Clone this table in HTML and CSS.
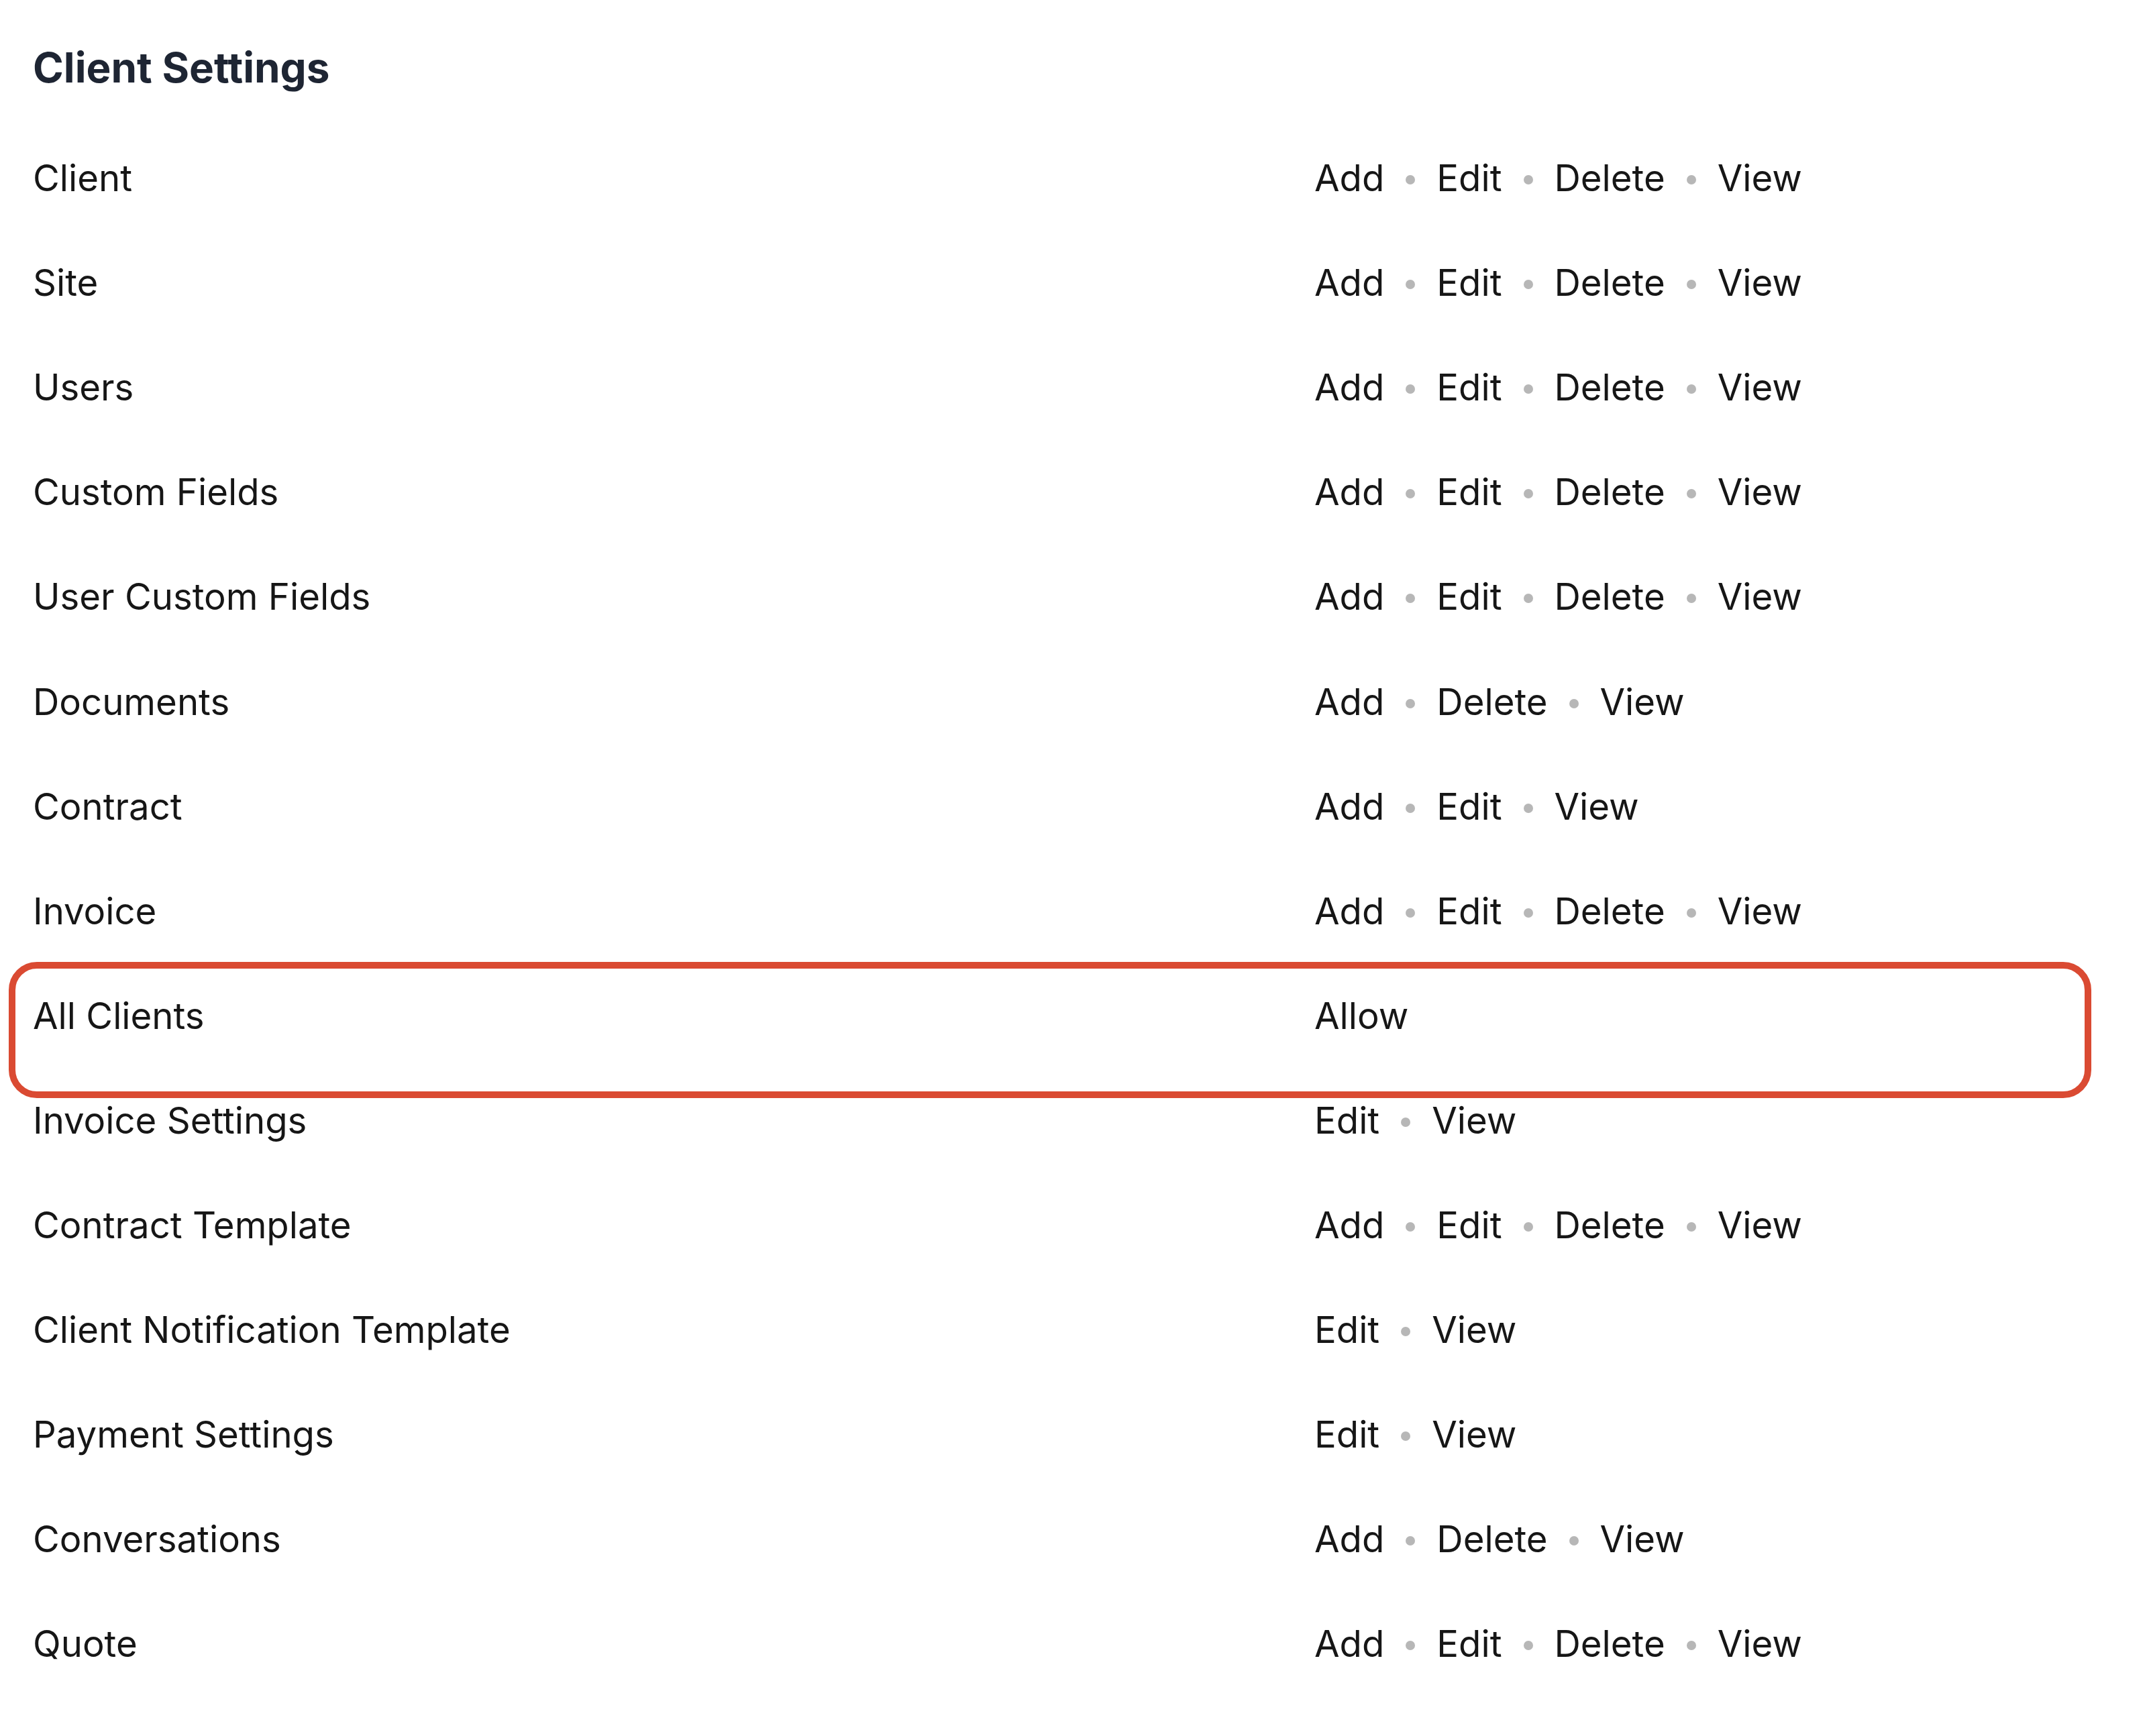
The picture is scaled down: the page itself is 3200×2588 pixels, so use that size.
FILE: index.html
```html
<!DOCTYPE html>
<html lang="en">
<head>
<meta charset="utf-8">
<title>Client Settings</title>
<link rel="stylesheet" href="styles.css">
</head>
<body>
<main class="page">
  <h1 class="title">Client Settings</h1>
  <div class="list">
    <div class="row"><div class="label">Client</div><div class="perms"><span>Add</span><i class="dot"></i><span>Edit</span><i class="dot"></i><span>Delete</span><i class="dot"></i><span>View</span></div></div>
    <div class="row"><div class="label">Site</div><div class="perms"><span>Add</span><i class="dot"></i><span>Edit</span><i class="dot"></i><span>Delete</span><i class="dot"></i><span>View</span></div></div>
    <div class="row"><div class="label">Users</div><div class="perms"><span>Add</span><i class="dot"></i><span>Edit</span><i class="dot"></i><span>Delete</span><i class="dot"></i><span>View</span></div></div>
    <div class="row"><div class="label">Custom Fields</div><div class="perms"><span>Add</span><i class="dot"></i><span>Edit</span><i class="dot"></i><span>Delete</span><i class="dot"></i><span>View</span></div></div>
    <div class="row"><div class="label">User Custom Fields</div><div class="perms"><span>Add</span><i class="dot"></i><span>Edit</span><i class="dot"></i><span>Delete</span><i class="dot"></i><span>View</span></div></div>
    <div class="row"><div class="label">Documents</div><div class="perms"><span>Add</span><i class="dot"></i><span>Delete</span><i class="dot"></i><span>View</span></div></div>
    <div class="row"><div class="label">Contract</div><div class="perms"><span>Add</span><i class="dot"></i><span>Edit</span><i class="dot"></i><span>View</span></div></div>
    <div class="row"><div class="label">Invoice</div><div class="perms"><span>Add</span><i class="dot"></i><span>Edit</span><i class="dot"></i><span>Delete</span><i class="dot"></i><span>View</span></div></div>
    <div class="row row-highlight"><div class="label">All Clients</div><div class="perms"><span>Allow</span></div></div>
    <div class="row"><div class="label">Invoice Settings</div><div class="perms"><span>Edit</span><i class="dot"></i><span>View</span></div></div>
    <div class="row"><div class="label">Contract Template</div><div class="perms"><span>Add</span><i class="dot"></i><span>Edit</span><i class="dot"></i><span>Delete</span><i class="dot"></i><span>View</span></div></div>
    <div class="row"><div class="label">Client Notification Template</div><div class="perms"><span>Edit</span><i class="dot"></i><span>View</span></div></div>
    <div class="row"><div class="label">Payment Settings</div><div class="perms"><span>Edit</span><i class="dot"></i><span>View</span></div></div>
    <div class="row"><div class="label">Conversations</div><div class="perms"><span>Add</span><i class="dot"></i><span>Delete</span><i class="dot"></i><span>View</span></div></div>
    <div class="row"><div class="label">Quote</div><div class="perms"><span>Add</span><i class="dot"></i><span>Edit</span><i class="dot"></i><span>Delete</span><i class="dot"></i><span>View</span></div></div>
  </div>
</main>
</body>
</html>
```
FILE: styles.css
```css
* { box-sizing: border-box; }
html, body {
  margin: 0;
  padding: 0;
  background: #ffffff;
}
body {
  font-family: Inter, "Liberation Sans", Arial, sans-serif;
  color: #161616;
}
.page {
  width: 3200px;
  min-height: 2588px;
  padding: 63px 0 0 49px;
}
.title {
  margin: 0 0 48px 0;
  font-size: 62px;
  line-height: 76px;
  font-weight: 700;
  color: #1e2533;
  letter-spacing: 0;
}
.list {
  display: flex;
  flex-direction: column;
}
.row {
  position: relative;
  display: grid;
  grid-template-columns: 1910px 1fr;
  align-items: center;
  height: 156.1px;
  font-size: 54.5px;
  line-height: 66px;
}
.label {
  white-space: nowrap;
}
.perms {
  display: flex;
  align-items: center;
  white-space: nowrap;
}
.dot {
  display: block;
  width: 14px;
  height: 14px;
  border-radius: 50%;
  background: #b7b7b7;
  margin: 6px 32px 0 32px;
}
.row-highlight::after {
  content: "";
  position: absolute;
  left: -36px;
  right: 83px;
  top: -2px;
  height: 183px;
  border: 10px solid #da4a32;
  border-radius: 42px;
  pointer-events: none;
}
```
